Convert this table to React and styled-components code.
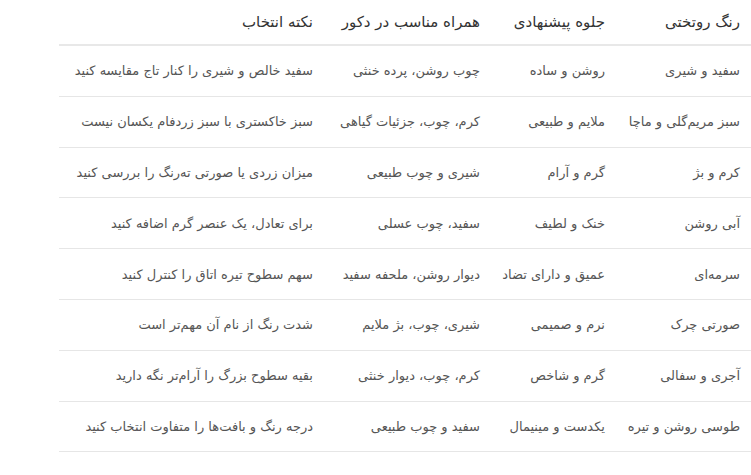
import React from 'react'
import styled, { createGlobalStyle } from 'styled-components'

const GlobalStyle = createGlobalStyle`
  html, body {
    margin: 0;
    padding: 0;
    background: #ffffff;
  }
  body {
    font-family: "DejaVu Sans", "Noto Sans", sans-serif;
  }
`

const rows = [
  ['سفید و شیری', 'روشن و ساده', 'چوب روشن، پرده خنثی', 'سفید خالص و شیری را کنار تاج مقایسه کنید'],
  ['سبز مریم‌گلی و ماچا', 'ملایم و طبیعی', 'کرم، چوب، جزئیات گیاهی', 'سبز خاکستری با سبز زردفام یکسان نیست'],
  ['کرم و بژ', 'گرم و آرام', 'شیری و چوب طبیعی', 'میزان زردی یا صورتی ته‌رنگ را بررسی کنید'],
  ['آبی روشن', 'خنک و لطیف', 'سفید، چوب عسلی', 'برای تعادل، یک عنصر گرم اضافه کنید'],
  ['سرمه‌ای', 'عمیق و دارای تضاد', 'دیوار روشن، ملحفه سفید', 'سهم سطوح تیره اتاق را کنترل کنید'],
  ['صورتی چرک', 'نرم و صمیمی', 'شیری، چوب، بژ ملایم', 'شدت رنگ از نام آن مهم‌تر است'],
  ['آجری و سفالی', 'گرم و شاخص', 'کرم، چوب، دیوار خنثی', 'بقیه سطوح بزرگ را آرام‌تر نگه دارید'],
  ['طوسی روشن و تیره', 'یکدست و مینیمال', 'سفید و چوب طبیعی', 'درجه رنگ و بافت‌ها را متفاوت انتخاب کنید'],
]

const headers = ['رنگ روتختی', 'جلوه پیشنهادی', 'همراه مناسب در دکور', 'نکته انتخاب']
const widths = [135, 125, 167, 266]

const Page = styled.div`
  width: 751px;
  overflow: hidden;
  direction: rtl;
`

const Table = styled.table`
  width: 693px;
  margin-right: -1px;
  border-collapse: collapse;
  table-layout: fixed;
`

const HeadCell = styled.th`
  height: 44px;
  padding: 0 12px;
  text-align: right;
  vertical-align: middle;
  font-size: 15px;
  font-weight: normal;
  color: #333333;
  white-space: nowrap;
  border-bottom: 2px solid #e8e8e8;
`

const Cell = styled.td`
  height: 49.8px;
  padding: 0 12px;
  text-align: right;
  vertical-align: middle;
  font-size: 13px;
  color: #555555;
  white-space: nowrap;
  border-bottom: 1px solid #e6e6e6;
`

export default function App() {
  return (
    <>
      <GlobalStyle />
      <Page>
        <Table>
          <colgroup>
            {widths.map((w, i) => (
              <col key={i} style={{ width: w }} />
            ))}
          </colgroup>
          <thead>
            <tr>
              {headers.map((h) => (
                <HeadCell key={h}>{h}</HeadCell>
              ))}
            </tr>
          </thead>
          <tbody>
            {rows.map((r, i) => (
              <tr key={i}>
                {r.map((c, j) => (
                  <Cell key={j}>{c}</Cell>
                ))}
              </tr>
            ))}
          </tbody>
        </Table>
      </Page>
    </>
  )
}
